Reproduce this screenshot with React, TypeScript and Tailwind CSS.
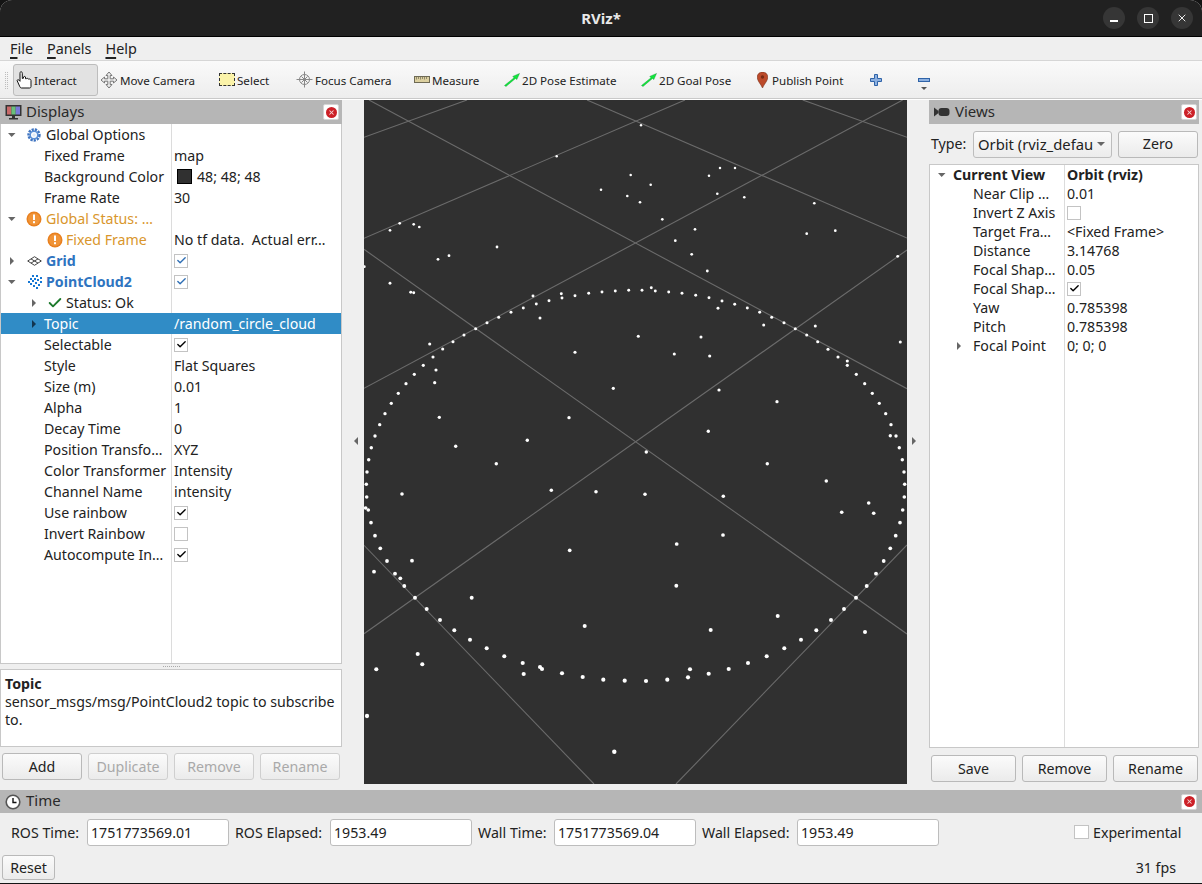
import React from 'react';
import { Check, X } from 'lucide-react';

const fontStack = { fontFamily: '"Noto Sans", "Open Sans", sans-serif' };

const gridLines = [
  [5, 0, 543, 288.7],
  [0, 37.3, 103, 0],
  [223, 0, 543, 138],
  [0, 138.3, 321, 0],
  [0, 288.3, 538.7, 0],
  [0, 149.3, 543, 534],
  [438.7, 0, 543, 37.3],
  [0, 533.7, 543, 150],
  [0, 445.3, 230, 684],
  [312, 684, 543, 445],
];

const cloudPoints = [
  [192.7,56.3],[266.7,75],[237,89.7],[263.3,96],[35.7,123.3],[49.7,124.3],[55.3,127],[26,130.3],[133,147],[85,155.7],[74,159.3],[0.3,166.7],
  [26,183.3],[46.7,192.3],[49.7,192.7],[169,196],[197.3,193.7],[198,198],[211,195.7],[224.7,193.3],[238,192],[251.3,191],[264.7,190.3],
  [185,200.7],[172.3,204],[159.3,208],[147,212.3],[134.7,217.3],[123,222.7],[176,218],[111.7,228.7],[100,235],[89,241.7],[78.7,249],[65.7,244],
  [69,257],[59.3,265.3],[72,270],[50.3,274.3],[42,283.7],[70.7,282.7],[34.3,293.3],[27.3,303.3],[21,313.7],[15.7,324.7],[11,336],[75.3,317.3],
  [211,252.3],[249.3,288.3],[205,317.7],[163.3,340.3],
  [277,25.3],[356,68],[371,68],[345,75.7],[286.7,84.7],[353.3,93.7],[380.3,97.3],[276,102.3],[450.3,103.3],[298.3,119.3],[331,129.3],[471.3,130.7],
  [442.7,133.7],[311.3,140.7],[327.7,154.3],[533.7,156.3],[343.3,171],[278,190.3],[287.3,187.7],[291.3,191],[304.7,192],[318,193.3],[331.7,195.3],
  [345,197.7],[358,201],[370.7,204.3],[354,208.3],[383.3,208],[395.7,212.3],[407.7,217.3],[420,222.7],[399.7,225],[431.3,228.7],[451.3,226],
  [442.7,235],[453.7,241.7],[536.3,242],[274.3,236.3],[337,237],[310.3,254],[345.7,256],[464,249.3],[474,257],[483.3,261],[483.3,265.3],[492.3,274.3],
  [500.7,283.7],[508.3,293.3],[515.3,303.3],[521.7,313.7],[527,324.7],[526.3,335.7],[532,336],[355,290],[413,301.7],[344.3,331.3],
  [7.3,347.7],[91.7,346.3],[4.7,359.7],[132.3,363.7],[3,372],[2.3,384.3],[187.3,390.3],[232,391.7],[38,394],[2.7,397],[1.7,408],[4.3,410],[7,422.7],
  [11,435.7],[16.3,448.3],[205.7,450.3],[23,461],[48,460.7],[10,471.7],[31,473.7],[36.3,478.3],[40.3,486],[51,497.7],[107.7,497.7],[62.7,509],[76,520],
  [90.3,530.3],[220.7,526],[106,539.7],[122.7,548.3],[140.3,556.3],[53.7,554],[58.3,564.3],[158.7,563],[159.7,574],[12.3,569.3],[176,567],[178,569],
  [198,573.3],[218.7,577],[239.3,579.7],[260.7,580.7],[3,616],[250.3,651.7],
  [282.3,352],[403.3,363.7],[462.3,381],[535.3,347.7],[538.3,359.7],[540,372],[540.7,384.3],[540.3,397],[538.7,410],[536,422.7],[531.7,435.7],[526.3,448.3],
  [519.7,461],[512,473.7],[502.7,486],[492,497.7],[480,509],[467,520],[452.3,530.3],[437,539.7],[420.3,548.3],[402.7,556.3],[384,563],[364.7,569],
  [344.7,573.7],[324,577.3],[303.3,579.7],[282,581],[326,569.3],[281,394.3],[359.3,396.3],[359,435],[312.7,444],[312.3,485.7],[477.7,412.3],[504.7,403],
  [509.7,413.3],[413.7,516],[346.7,530],[501,532],
];

const Arrow = ({ open, dark }: { open?: boolean; dark?: boolean }) => (
  <svg width="10" height="10" viewBox="0 0 10 10">
    {open ? <path d="M1 3h7.5L4.7 7z" fill="#666" /> : <path d="M3 1v8l4-4z" fill={dark ? '#12354f' : '#666'} />}
  </svg>
);

const GearIcon = () => (
  <svg width="14" height="14" viewBox="0 0 14 14">
    <circle cx="7" cy="7" r="5.4" fill="none" stroke="#3f74c0" strokeWidth="2.6" strokeDasharray="2.2 1" />
    <circle cx="7" cy="7" r="3.8" fill="none" stroke="#5b8fd6" strokeWidth="1.6" />
    <circle cx="7" cy="7" r="1.7" fill="#dfe9f7" />
  </svg>
);

const WarnIcon = () => (
  <svg width="16" height="16" viewBox="0 0 16 16">
    <circle cx="8" cy="8" r="7.5" fill="#e8801f" />
    <circle cx="8" cy="8" r="6" fill="#f09438" />
    <rect x="7" y="3.5" width="2" height="5.5" fill="#fff" />
    <rect x="7" y="10.2" width="2" height="2" fill="#fff" />
  </svg>
);

const GridIcon = () => (
  <svg width="15" height="10" viewBox="0 0 15 10" fill="none" stroke="#444" strokeWidth="1">
    <path d="M7.5 .7 14.3 5 7.5 9.3.7 5z" />
    <path d="M4 2.9 11 7.1M11 2.9 4 7.1" />
  </svg>
);

const CloudIcon = () => (
  <svg width="15" height="15" viewBox="0 0 15 15" fill="#1577d4" shapeRendering="crispEdges">
    {[[1,7],[3,4],[3,9],[5,1],[5,6],[6,11],[7,4],[8,8],[9,1],[9,13],[10,5],[11,10],[13,3],[13,7]].map(([x, y]) => (
      <rect key={`${x}-${y}`} x={x} y={y} width="2" height="2" />
    ))}
  </svg>
);

const Checkbox = ({ on, blue }: { on?: boolean; blue?: boolean }) => (
  <span className="flex h-[14px] w-[14px] items-center justify-center border border-[#c3c3c3] bg-white">
    {on && <Check size={11} strokeWidth={3} className={blue ? 'text-[#2f6fb5]' : 'text-black'} />}
  </span>
);

const CloseButton = () => (
  <span className="flex h-[16px] w-[16px] items-center justify-center rounded-[2px] border border-[#d5d5d5] bg-white">
    <span className="flex h-[11px] w-[11px] items-center justify-center rounded-full bg-[#cc2027]">
      <X size={7} strokeWidth={3.5} className="text-[#f6d5d5]" />
    </span>
  </span>
);

type Row = {
  name: string;
  depth: 0 | 1;
  arrow?: 'open' | 'closed';
  icon?: React.ReactNode;
  tone?: string;
  value?: React.ReactNode;
  selected?: boolean;
};

const displayRows: Row[] = [
  { name: 'Global Options', depth: 0, arrow: 'open', icon: <GearIcon /> },
  { name: 'Fixed Frame', depth: 1, value: 'map' },
  {
    name: 'Background Color',
    depth: 1,
    value: (
      <span className="flex items-center gap-[5px]">
        <span className="ml-[3px] h-[15px] w-[15px] border border-black bg-[#303030]" />
        48; 48; 48
      </span>
    ),
  },
  { name: 'Frame Rate', depth: 1, value: '30' },
  { name: 'Global Status: …', depth: 0, arrow: 'open', icon: <WarnIcon />, tone: 'text-[#d9962c]' },
  { name: 'Fixed Frame', depth: 1, icon: <WarnIcon />, tone: 'text-[#d9962c]', value: 'No tf data.  Actual err…' },
  { name: 'Grid', depth: 0, arrow: 'closed', icon: <GridIcon />, tone: 'font-bold text-[#2f74c0]', value: <Checkbox on blue /> },
  { name: 'PointCloud2', depth: 0, arrow: 'open', icon: <CloudIcon />, tone: 'font-bold text-[#2f74c0]', value: <Checkbox on blue /> },
  { name: 'Status: Ok', depth: 1, arrow: 'closed', icon: <Check size={16} strokeWidth={2.8} className="text-[#1d7a2c]" /> },
  { name: 'Topic', depth: 1, arrow: 'closed', value: '/random_circle_cloud', selected: true },
  { name: 'Selectable', depth: 1, value: <Checkbox on /> },
  { name: 'Style', depth: 1, value: 'Flat Squares' },
  { name: 'Size (m)', depth: 1, value: '0.01' },
  { name: 'Alpha', depth: 1, value: '1' },
  { name: 'Decay Time', depth: 1, value: '0' },
  { name: 'Position Transfo…', depth: 1, value: 'XYZ' },
  { name: 'Color Transformer', depth: 1, value: 'Intensity' },
  { name: 'Channel Name', depth: 1, value: 'intensity' },
  { name: 'Use rainbow', depth: 1, value: <Checkbox on /> },
  { name: 'Invert Rainbow', depth: 1, value: <Checkbox /> },
  { name: 'Autocompute In…', depth: 1, value: <Checkbox on /> },
];

const viewRows: { name: string; value?: React.ReactNode; bold?: boolean; arrow?: 'open' | 'closed' }[] = [
  { name: 'Current View', value: 'Orbit (rviz)', bold: true, arrow: 'open' },
  { name: 'Near Clip …', value: '0.01' },
  { name: 'Invert Z Axis', value: <Checkbox /> },
  { name: 'Target Fra…', value: '<Fixed Frame>' },
  { name: 'Distance', value: '3.14768' },
  { name: 'Focal Shap…', value: '0.05' },
  { name: 'Focal Shap…', value: <Checkbox on /> },
  { name: 'Yaw', value: '0.785398' },
  { name: 'Pitch', value: '0.785398' },
  { name: 'Focal Point', value: '0; 0; 0', arrow: 'closed' },
];

const Button = ({ label, disabled, className }: { label: string; disabled?: boolean; className: string }) => (
  <button
    className={`flex items-center justify-center rounded-[3px] border bg-gradient-to-b from-[#fbfbfb] to-[#ebebeb] ${
      disabled ? 'border-[#cfcfcf] text-[#a9a9a9]' : 'border-[#b9b9b9] text-[#222]'
    } ${className}`}
  >
    {label}
  </button>
);

const TimeField = ({ label, value, labelClass, inputClass }: { label: string; value: string; labelClass: string; inputClass: string }) => (
  <>
    <span className={labelClass}>{label}</span>
    <span className={`flex h-[27px] items-center rounded-[3px] border border-[#bdbdbd] bg-white pl-[3px] ${inputClass}`}>{value}</span>
  </>
);

const ToolIcon = ({ children }: { children: React.ReactNode }) => <span className="flex h-[18px] w-[18px] shrink-0 items-center justify-center">{children}</span>;

const ToolLabel = ({ children }: { children: React.ReactNode }) => <span className="pt-[2px] whitespace-nowrap">{children}</span>;

const PoseArrow = () => (
  <svg width="16" height="14" viewBox="0 0 16 14">
    <path d="M.5 12.5 10 4.8 8.8 3.4 15.5.5 12.8 6.6 11.5 5.4 2 13.5z" fill="#10e83c" stroke="#0b8f28" strokeWidth=".4" />
  </svg>
);

const PanelTitle = ({ icon, title, className, closeClass }: { icon: React.ReactNode; title: string; className: string; closeClass: string }) => (
  <div className={`flex items-center bg-[#b6b6b6] text-[#2a2a2a] ${className}`}>
    <span className="flex w-[26px] shrink-0 items-center justify-center">{icon}</span>
    <span className="pb-[2px] text-[15px]">{title}</span>
    <span className={`ml-auto ${closeClass}`}>
      <CloseButton />
    </span>
  </div>
);

export default function App() {
  return (
    <div style={fontStack} className="h-[884px] w-[1202px] overflow-hidden bg-[#141414] text-[14.2px] text-[#222]">
      <div className="flex h-[883px] flex-col overflow-hidden rounded-t-[12px] bg-[#efefef]">
        {/* title bar */}
        <div className="relative flex h-[37px] shrink-0 items-center justify-end gap-[12px] border-b border-black bg-[#212121] pr-[9px]">
          <span className="absolute left-0 right-0 text-center text-[15px] font-bold text-[#e8e8e8]">RViz*</span>
          {[
            <span key="min" className="mt-[6px] h-[1.5px] w-[8px] bg-white" />,
            <span key="max" className="h-[9px] w-[9px] border-[1.5px] border-white" />,
            <X key="close" size={12} strokeWidth={1.8} className="text-white" />,
          ].map((glyph, i) => (
            <span key={i} className="relative flex h-[22px] w-[22px] items-center justify-center rounded-full bg-[#363636]">
              {glyph}
            </span>
          ))}
        </div>

        {/* menu */}
        <div className="flex h-[24px] shrink-0 items-center gap-[14px] border-b border-[#d6d6d6] pl-[10px] text-[14.4px]">
          <span><span className="underline decoration-[1.5px] underline-offset-[3px]">F</span>ile</span>
          <span><span className="underline decoration-[1.5px] underline-offset-[3px]">P</span>anels</span>
          <span><span className="underline decoration-[1.5px] underline-offset-[3px]">H</span>elp</span>
        </div>

        {/* toolbar */}
        <div className="flex h-[38px] shrink-0 items-center border-b border-[#c9c9c9] bg-gradient-to-b from-[#fafafa] to-[#ededed] pt-[1px] text-[11.6px]">
          <span className="ml-[5px] mr-[5px] h-[17px] w-[3px] border-x border-dotted border-[#bdbdbd]" />
          <div className="flex h-[32px] w-[85px] items-center rounded-[3px] border border-[#bdbdbd] bg-[#e2e2e2] pl-[2px]">
            <ToolIcon>
              <svg width="18" height="18" viewBox="0 0 18 18" fill="#fff" stroke="#111" strokeWidth="1">
                <path d="M5 .8c1 0 1.3.6 1.3 1.5v5.2l1.2-.3V6c.3-.8 1.7-.8 2 0v1.7l1-.1c.5-.5 1.6-.3 1.8.5l1-.1c1 0 1.7.6 1.7 1.5V15.5c0 .9-.6 1.5-1.5 1.5H5.5c-.8 0-1.3-.5-1.6-1.2L1.2 9.8c-.3-1 .9-1.6 1.6-.8l1.2 1.3V2.3c0-.9.2-1.5 1-1.5z" />
              </svg>
            </ToolIcon>
            <ToolLabel>Interact</ToolLabel>
          </div>
          <div className="ml-[2px] flex w-[119px] items-center gap-[2px]">
            <ToolIcon>
              <svg width="18" height="18" viewBox="0 0 18 18" fill="#ececec" stroke="#777" strokeWidth="1">
                <path d="M9 1 12 4.5H10.2V7.8H13.5V6L17 9 13.5 12V10.2H10.2V13.5H12L9 17 6 13.5H7.8V10.2H4.5V12L1 9 4.5 6V7.8H7.8V4.5H6z" />
              </svg>
            </ToolIcon>
            <ToolLabel>Move Camera</ToolLabel>
          </div>
          <div className="flex w-[76px] items-center gap-[2px]">
            <span className="relative h-[13px] w-[16px] border border-dashed border-[#333] bg-[#fbf3a9]" />
            <ToolLabel>Select</ToolLabel>
          </div>
          <div className="flex w-[118px] items-center gap-[2px]">
            <ToolIcon>
              <svg width="17" height="17" viewBox="0 0 17 17" fill="none" stroke="#888" strokeWidth="1">
                <circle cx="8.5" cy="8.5" r="5" />
                <path d="M8.5 .5v16M.5 8.5h16M5.5 5.5l6 6M11.5 5.5l-6 6" />
              </svg>
            </ToolIcon>
            <ToolLabel>Focus Camera</ToolLabel>
          </div>
          <div className="flex w-[90px] items-center gap-[1px]">
            <ToolIcon>
              <svg width="16" height="8" viewBox="0 0 16 8">
                <rect x=".5" y=".5" width="15" height="6" fill="#dcd0a0" stroke="#6e6a55" />
                <path d="M2.5 1v2.5M4.5 1v2M6.5 1v2.5M8.5 1v2M10.5 1v2.5M12.5 1v2" stroke="#6e6a55" strokeWidth=".7" />
              </svg>
            </ToolIcon>
            <ToolLabel>Measure</ToolLabel>
          </div>
          <div className="flex w-[137px] items-center gap-[1px]">
            <ToolIcon><PoseArrow /></ToolIcon>
            <ToolLabel>2D Pose Estimate</ToolLabel>
          </div>
          <div className="flex w-[116px] items-center gap-[1px]">
            <ToolIcon><PoseArrow /></ToolIcon>
            <ToolLabel>2D Goal Pose</ToolLabel>
          </div>
          <div className="ml-[1px] flex w-[113px] items-center gap-[4px]">
            <svg width="11" height="16" viewBox="0 0 11 16">
              <path d="M5.5 0C2.4 0 .2 2.2.2 5.2c0 3.6 3.5 6.6 5.3 10.8 1.8-4.2 5.3-7.2 5.3-10.8C10.8 2.2 8.6 0 5.5 0z" fill="#bc4a2a" stroke="#6e2d18" strokeWidth=".5" />
              <circle cx="5.5" cy="5" r="1.7" fill="#7a2a14" />
            </svg>
            <ToolLabel>Publish Point</ToolLabel>
          </div>
          <svg width="12" height="12" viewBox="0 0 12 12" fill="#8cb0e0" stroke="#2f63a8" strokeWidth="1">
            <path d="M4.5.5h3v4h4v3h-4v4h-3v-4h-4v-3h4z" />
          </svg>
          <div className="relative ml-[36px] h-[12px] w-[12px]">
            <span className="absolute left-0 top-[4px] h-[4px] w-[12px] border border-[#2f63a8] bg-[#8cb0e0]" />
            <span className="absolute left-[3px] top-[13px] h-0 w-0 border-x-[3px] border-t-[3px] border-x-transparent border-t-[#555]" />
          </div>
        </div>

        <div className="h-[1px] shrink-0 bg-white" />

        {/* main */}
        <div className="flex h-[690px] shrink-0">
          {/* displays */}
          <div className="flex w-[342px] shrink-0 flex-col">
            <PanelTitle
              className="h-[24px]"
              closeClass="mr-[3px]"
              title="Displays"
              icon={
                <svg width="17" height="17" viewBox="0 0 17 17">
                  <rect x=".5" y="1" width="16" height="11" fill="#333" />
                  <rect x="2" y="2.5" width="4.4" height="8" fill="#c86a6a" />
                  <rect x="6.4" y="2.5" width="4.3" height="8" fill="#6ac07a" />
                  <rect x="10.7" y="2.5" width="4.3" height="8" fill="#7a7ad8" />
                  <path d="M7 12h3v2h3v1.5H4V14h3z" fill="#333" />
                </svg>
              }
            />
            <div className="h-[540px] shrink-0 border border-t-0 border-[#c8c8c8] bg-white">
              <div className="relative h-full">
                <span className="absolute bottom-0 left-[170px] top-0 w-px bg-[#dcdcdc]" />
                {displayRows.map((row, i) => (
                  <div key={i} className={`relative flex h-[21px] items-center ${row.selected ? 'bg-[#308cc6] text-white' : ''}`}>
                    <div className={`flex w-[171px] shrink-0 items-center whitespace-nowrap ${row.depth === 1 ? 'pl-[22px]' : ''} ${row.tone ?? ''}`}>
                      <span className="flex w-[21px] shrink-0 items-center justify-center">
                        {row.arrow && <Arrow open={row.arrow === 'open'} dark={row.selected} />}
                      </span>
                      {row.icon && <span className={`flex shrink-0 items-center justify-center ${row.depth === 0 ? 'w-[24px]' : 'w-[22px]'}`}>{row.icon}</span>}
                      {row.name}
                    </div>
                    <div className="flex items-center whitespace-pre pl-[2px]">{row.value}</div>
                  </div>
                ))}
              </div>
            </div>
            <div className="flex h-[5px] shrink-0 items-center justify-center">
              <span className="h-[1px] w-[17px] border-t border-dotted border-[#aaa]" />
            </div>
            <div className="h-[78px] shrink-0 border border-[#c8c8c8] bg-white px-[4px] pt-[5px] leading-[18px]">
              <div className="font-bold">Topic</div>
              <div>sensor_msgs/msg/PointCloud2 topic to subscribe to.</div>
            </div>
            <div className="mt-[6px] flex gap-[6px] pl-[2px]">
              <Button label="Add" className="h-[27px] w-[80px]" />
              <Button label="Duplicate" disabled className="h-[27px] w-[80px]" />
              <Button label="Remove" disabled className="h-[27px] w-[80px]" />
              <Button label="Rename" disabled className="h-[27px] w-[80px]" />
            </div>
          </div>

          {/* left handle */}
          <div className="flex h-[684px] w-[22px] shrink-0 items-center justify-end pr-[6px] pb-[2px]">
            <span className="h-0 w-0 border-y-[4px] border-r-[4px] border-y-transparent border-r-[#666]" />
          </div>

          {/* 3d view */}
          <div className="h-[684px] w-[543px] shrink-0 bg-[#303030]">
            <svg width="543" height="684" viewBox="0 0 543 684" className="block">
              {gridLines.map(([x1, y1, x2, y2], i) => (
                <line key={i} x1={x1} y1={y1} x2={x2} y2={y2} stroke="#6b6b6b" strokeWidth="1.1" />
              ))}
              {cloudPoints.map(([x, y], i) => (
                <circle key={i} cx={x} cy={y} r={1.15 + (y / 684) * 1.1} fill="#fff" />
              ))}
            </svg>
          </div>

          {/* right handle */}
          <div className="flex h-[684px] w-[22px] shrink-0 items-center justify-start pl-[5px] pb-[2px]">
            <span className="h-0 w-0 border-y-[4px] border-l-[4px] border-y-transparent border-l-[#666]" />
          </div>

          {/* views */}
          <div className="flex w-[270px] shrink-0 flex-col">
            <PanelTitle
              className="h-[24px]"
              closeClass="mr-[2px]"
              title="Views"
              icon={
                <svg width="16" height="10" viewBox="0 0 16 10" fill="#333">
                  <path d="M0 .5 4.5 4V6L0 9.5z" />
                  <rect x="4.5" y="1" width="11" height="8" rx="3" />
                </svg>
              }
            />
            <div className="flex h-[40px] shrink-0 items-center pl-[2px]">
              <span className="w-[42px]">Type:</span>
              <span className="flex h-[27px] w-[139px] items-center justify-between overflow-hidden whitespace-nowrap rounded-[3px] border border-[#bdbdbd] bg-gradient-to-b from-[#fbfbfb] to-[#ececec] pl-[4px] pr-[7px] text-[14.8px]">
                Orbit (rviz_defau
                <span className="ml-1 h-0 w-0 shrink-0 border-x-[4px] border-t-[4px] border-x-transparent border-t-[#666]" />
              </span>
              <Button label="Zero" className="ml-[6px] h-[27px] w-[80px]" />
            </div>
            <div className="relative h-[584px] shrink-0 border border-[#c8c8c8] bg-white">
              <span className="absolute bottom-0 left-[134px] top-0 w-px bg-[#dcdcdc]" />
              {viewRows.map((row) => (
                <div key={row.name + row.value} className={`relative flex h-[19px] items-center whitespace-nowrap ${row.bold ? 'font-bold' : ''}`}>
                  <div className="flex w-[135px] shrink-0 items-center">
                    <span className={`flex shrink-0 items-center justify-center ${row.bold ? 'w-[23px]' : 'w-[43px] justify-end pr-[9px]'}`}>
                      {row.arrow && <Arrow open={row.arrow === 'open'} />}
                    </span>
                    {row.name}
                  </div>
                  <div className="pl-[2px]">{row.value}</div>
                </div>
              ))}
            </div>
            <div className="mt-[7px] flex gap-[6px] pl-[2px]">
              <Button label="Save" className="h-[27px] w-[85px]" />
              <Button label="Remove" className="h-[27px] w-[85px]" />
              <Button label="Rename" className="h-[27px] w-[85px]" />
            </div>
          </div>
        </div>

        {/* time */}
        <PanelTitle
          className="h-[23px] shrink-0"
          closeClass="mr-[5px]"
          title="Time"
          icon={
            <svg width="16" height="16" viewBox="0 0 16 16" fill="none">
              <circle cx="8" cy="8" r="6.8" fill="#fff" stroke="#555" strokeWidth="1.6" />
              <path d="M8 4v4.5h3.5" stroke="#111" strokeWidth="1.4" />
            </svg>
          }
        />
        <div className="flex h-[39px] shrink-0 items-center">
          <TimeField label="ROS Time:" value="1751773569.01" labelClass="ml-[11px] w-[76px]" inputClass="w-[142px]" />
          <TimeField label="ROS Elapsed:" value="1953.49" labelClass="ml-[6px] w-[95px]" inputClass="w-[142px]" />
          <TimeField label="Wall Time:" value="1751773569.04" labelClass="ml-[6px] w-[76px]" inputClass="w-[142px]" />
          <TimeField label="Wall Elapsed:" value="1953.49" labelClass="ml-[6px] w-[95px]" inputClass="w-[142px]" />
          <span className="ml-[135px] flex items-center gap-[4px]">
            <span className="h-[14px] w-[15px] border border-[#c3c3c3] bg-white" />
            Experimental
          </span>
        </div>
        <div className="flex h-[31px] shrink-0 items-center justify-between pr-[26px] pl-[2px]">
          <Button label="Reset" className="h-[25px] w-[53px]" />
          <span>31 fps</span>
        </div>
      </div>
    </div>
  );
}
